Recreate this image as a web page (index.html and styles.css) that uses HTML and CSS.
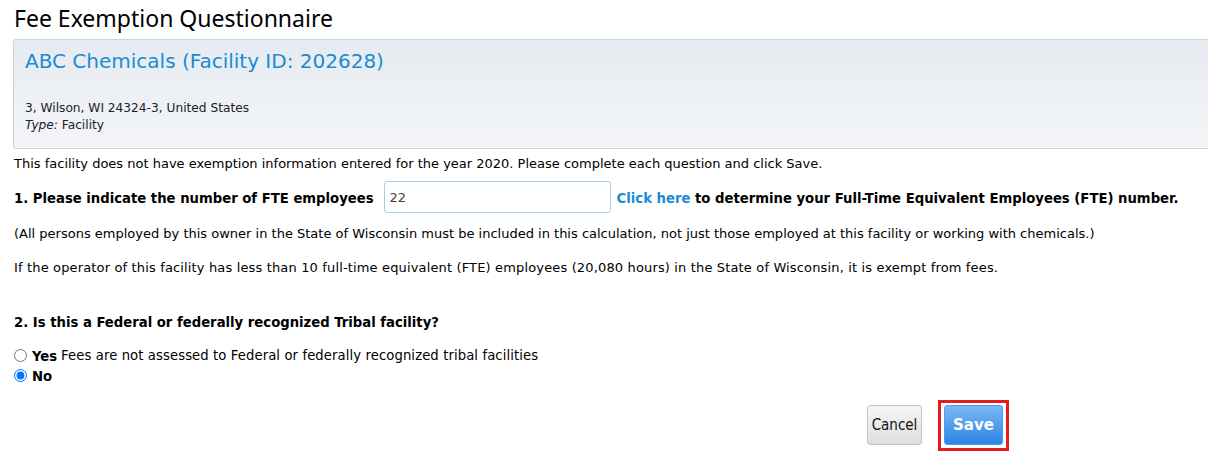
FILE: index.html
```html
<!DOCTYPE html>
<html>
<head>
<meta charset="utf-8">
<link rel="stylesheet" href="styles.css">
</head>
<body>
<h1 class="title">Fee Exemption Questionnaire</h1>
<div class="panel">
  <h2 class="facility">ABC Chemicals (Facility ID: 202628)</h2>
  <div class="addr">3, Wilson, WI 24324-3, United States</div>
  <div class="addr"><em>Type:</em> Facility</div>
</div>
<p class="intro">This facility does not have exemption information entered for the year 2020. Please complete each question and click Save.</p>
<div class="q1">
  <span class="qlabel">1. Please indicate the number of FTE employees</span>
  <input class="fte" type="text" value="22">
  <span class="qlabel"><a class="link" href="#">Click here</a> to determine your Full-Time Equivalent Employees (FTE) number.</span>
</div>
<p class="note">(All persons employed by this owner in the State of Wisconsin must be included in this calculation, not just those employed at this facility or working with chemicals.)</p>
<p class="note2">If the operator of this facility has less than 10 full-time equivalent (FTE) employees (20,080 hours) in the State of Wisconsin, it is exempt from fees.</p>
<p class="q2">2. Is this a Federal or federally recognized Tribal facility?</p>
<div class="radios">
  <label class="opt"><input type="radio" name="fed"> <b>Yes</b> Fees are not assessed to Federal or federally recognized tribal facilities</label>
  <label class="opt"><input type="radio" name="fed" checked> <b>No</b></label>
</div>
<div class="actions">
  <button class="btn cancel" type="button">Cancel</button>
  <span class="highlight"><button class="btn save" type="button">Save</button></span>
</div>
</body>
</html>
```
FILE: styles.css
```css
html, body {
  margin: 0;
  padding: 0;
  background: #fff;
  overflow: hidden;
}
body {
  padding: 0 0 0 13px;
  font-family: "DejaVu Sans", sans-serif;
  font-size: 13px;
  color: #000;
}
.title {
  margin: 0;
  padding-top: 3px;
  height: 36px;
  font-family: "Noto Sans", "Open Sans", sans-serif;
  font-weight: normal;
  font-size: 23px;
  line-height: 30px;
  padding-left: 1px;
}
.panel {
  margin-right: -30px;
  height: 108px;
  border: 1px solid #d2d2d2;
  border-radius: 3px 0 0 3px;
  background: linear-gradient(#e6ebf1, #f3f5f8);
  padding: 0 0 0 11px;
}
.facility {
  margin: 0;
  padding-top: 6px;
  height: 54px;
  font-weight: normal;
  font-size: 20px;
  line-height: 30px;
  color: #1a8bd2;
}
.addr {
  font-size: 12.2px;
  line-height: 17px;
  color: #222;
}
.intro {
  margin: 7px 0 0 1px;
  line-height: 16px;
}
.q1 {
  display: flex;
  align-items: center;
  margin-top: 9px;
  height: 32px;
  padding-left: 1px;
  white-space: nowrap;
}
.qlabel {
  font-weight: bold;
  font-stretch: condensed;
  font-size: 14.7px;
}
.fte {
  margin: 0 6px 0 10px;
  width: 227px;
  height: 32px;
  flex: none;
  box-sizing: border-box;
  border: 1px solid #a8d0ec;
  border-radius: 3px;
  padding: 0 5px;
  font-family: "DejaVu Sans", sans-serif;
  font-size: 13px;
  color: #444;
}
.link {
  color: #1a8bd2;
  text-decoration: none;
}
.note {
  margin: 13px 0 0 1px;
  line-height: 16px;
}
.note2 {
  margin: 18px 0 0 1px;
  line-height: 16px;
  letter-spacing: 0.15px;
}
.q2 {
  margin: 37px 0 0 1px;
  font-weight: bold;
  font-stretch: condensed;
  font-size: 14.7px;
  line-height: 18px;
}
.radios {
  margin-top: 14px;
  display: flex;
  flex-direction: column;
}
.opt {
  display: flex;
  align-items: center;
  height: 20px;
  font-size: 13.2px;
  letter-spacing: 0.1px;
}
.opt input {
  margin: 0 5px 0 1px;
  width: 13px;
  height: 13px;
}
.opt b {
  font-size: 14.7px;
  font-stretch: condensed;
  letter-spacing: 0;
  margin-right: 4px;
}
.actions {
  display: flex;
  justify-content: flex-end;
  align-items: flex-start;
  margin-top: 15px;
  padding-right: 199px;
  gap: 16px;
}
.btn {
  height: 40px;
  border-radius: 3px;
  font-family: "DejaVu Sans", sans-serif;
  font-size: 15px;
  cursor: pointer;
}
.cancel {
  margin-top: 5px;
  width: 55px;
  padding: 0;
  background: linear-gradient(#f6f6f6, #dedede);
  border: 1px solid #c4c4c4;
  color: #111;
  font-stretch: condensed;
}
.highlight {
  display: inline-flex;
  padding: 2px 3px 3px;
  border: 3px solid #e41b23;
}
.save {
  width: 59px;
  padding: 0;
  background: linear-gradient(#79b9f4, #2b85e5);
  border: 1px solid #4d9be9;
  color: #fff;
  font-weight: bold;
}
```
